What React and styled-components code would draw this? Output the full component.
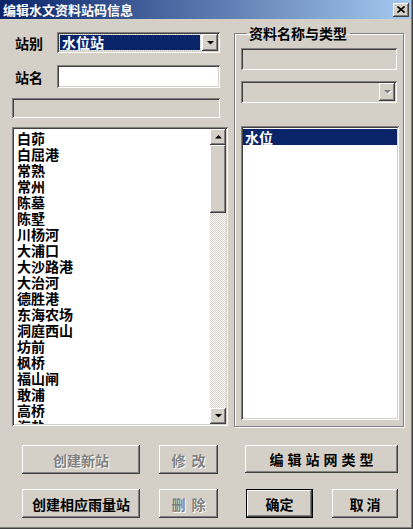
import React from "react";
import styled, { createGlobalStyle } from "styled-components";

const GlobalStyle = createGlobalStyle`
  body {
    margin: 0;
    background: #d4d0c8;
    font-family: "Noto Sans CJK SC", "Liberation Sans", sans-serif;
  }
`;

const stations = [
  "白茆", "白屈港", "常熟", "常州", "陈墓", "陈墅", "川杨河", "大浦口",
  "大沙路港", "大治河", "德胜港", "东海农场", "洞庭西山", "坊前", "枫桥",
  "福山闸", "敢浦", "高桥", "海盐",
];

const sunken = `
  box-shadow: inset 1px 1px #808080, inset -1px -1px #ffffff,
    inset 2px 2px #404040, inset -2px -2px #d4d0c8;
`;

const raised = `
  box-shadow: inset -1px -1px #404040, inset 1px 1px #ffffff,
    inset -2px -2px #808080, inset 2px 2px #d4d0c8;
`;

const Window = styled.div`
  width: 413px;
  height: 529px;
  box-sizing: border-box;
  background: #d4d0c8;
  display: flex;
  flex-direction: column;
  box-shadow: inset -1px -1px #404040, inset -2px -2px #808080;
  font-weight: 700;
  font-size: 14px;
  color: #000;
`;

const TitleBar = styled.div`
  height: 19px;
  width: 411px;
  flex: none;
  box-sizing: border-box;
  display: flex;
  align-items: center;
  justify-content: space-between;
  padding: 0 2px 0 3px;
  background: linear-gradient(to right, #0a246a, #a6caf0);
  color: #fff;
  font-size: 13px;
  line-height: 19px;
`;

const CloseButton = styled.div`
  width: 16px;
  height: 14px;
  display: flex;
  align-items: center;
  justify-content: center;
  background: #d4d0c8;
  ${raised}
`;

const Main = styled.div`
  display: flex;
  align-items: flex-start;
  height: 407px;
  flex: none;
  box-sizing: border-box;
  padding: 7px 0 0 12px;
`;

const LeftColumn = styled.div`
  width: 216px;
  padding-top: 6px;
  display: flex;
  flex-direction: column;
`;

const FieldRow = styled.div`
  display: flex;
  align-items: center;
  margin-top: ${(p) => p.$top || 0}px;
`;

const Label = styled.span`
  width: 45px;
  box-sizing: border-box;
  padding-left: 3px;
  line-height: 16px;
`;

const Combo = styled.div`
  width: ${(p) => p.$width}px;
  height: ${(p) => p.$height}px;
  box-sizing: border-box;
  padding: 2px;
  display: flex;
  align-items: stretch;
  background: ${(p) => (p.$disabled ? "#d4d0c8" : "#fff")};
  ${sunken}
`;

const ComboValue = styled.div`
  flex: 1;
  margin: 1px 2px 1px 1px;
  padding-left: 2px;
  background: ${(p) => (p.$selected ? "#0a246a" : "transparent")};
  color: #fff;
  line-height: 15px;
  outline: ${(p) => (p.$selected ? "1px dotted #c0c0c0" : "none")};
`;

const ArrowButton = styled.div`
  width: 16px;
  flex: none;
  display: flex;
  align-items: center;
  justify-content: center;
  background: #d4d0c8;
  ${raised}
`;

const TextInput = styled.div`
  width: ${(p) => p.$width}px;
  height: ${(p) => p.$height}px;
  box-sizing: border-box;
  background: ${(p) => (p.$disabled ? "#d4d0c8" : "#fff")};
  ${sunken}
`;

const ListBox = styled.div`
  width: ${(p) => p.$width}px;
  height: ${(p) => p.$height}px;
  margin-top: ${(p) => p.$top || 0}px;
  box-sizing: border-box;
  padding: 2px;
  display: flex;
  background: #fff;
  overflow: hidden;
  ${sunken}
`;

const Items = styled.div`
  flex: 1;
  overflow: hidden;
  padding: 1px 0 0 ${(p) => p.$pad}px;
`;

const Item = styled.div`
  line-height: 16px;
  height: 16px;
  white-space: nowrap;
  padding-left: 2px;
  background: ${(p) => (p.$selected ? "#0a246a" : "transparent")};
  color: ${(p) => (p.$selected ? "#fff" : "#000")};
`;

const ScrollBar = styled.div`
  width: 16px;
  flex: none;
  display: flex;
  flex-direction: column;
  background-color: #ffffff;
  background-image: repeating-conic-gradient(#d4d0c8 0 25%, #ffffff 0 50%);
  background-size: 2px 2px;
`;

const ScrollButton = styled.div`
  height: ${(p) => p.$height}px;
  flex: none;
  display: flex;
  align-items: center;
  justify-content: center;
  background: #d4d0c8;
  ${raised}
`;

const Track = styled.div`
  flex: 1;
`;

const Group = styled.fieldset`
  width: 170px;
  height: 401px;
  box-sizing: border-box;
  margin: 0 0 0 6px;
  padding: 8px 0 0 6px;
  border: 1px solid #808080;
  box-shadow: inset 1px 1px #fff, 1px 1px #fff;
  display: flex;
  flex-direction: column;
`;

const Legend = styled.legend`
  margin-left: 6px;
  padding: 0 3px 0 2px;
  line-height: 14px;
  font-size: 14px;
`;

const Stack = styled.div`
  display: flex;
  flex-direction: column;
  gap: ${(p) => p.$gap}px;
`;

const Footer = styled.div`
  display: grid;
  grid-template-columns: 118px 59px 161px;
  grid-template-rows: 29px 29px;
  column-gap: 19px;
  row-gap: 15px;
  padding: 19px 0 0 22px;
`;

const Button = styled.div`
  height: ${(p) => p.$height || 29}px;
  width: ${(p) => (p.$width ? `${p.$width}px` : "auto")};
  box-sizing: border-box;
  display: flex;
  align-items: center;
  justify-content: center;
  background: #d4d0c8;
  color: ${(p) => (p.$disabled ? "#808080" : "#000")};
  text-shadow: ${(p) => (p.$disabled ? "1px 1px #fff" : "none")};
  letter-spacing: ${(p) => p.$spacing || 0}px;
  text-indent: ${(p) => p.$spacing || 0}px;
  white-space: nowrap;
  ${raised}
  ${(p) =>
    p.$default &&
    `
    border: 1px solid #000;
    box-shadow: inset -1px -1px #404040, inset 1px 1px #ffffff,
      inset -2px -2px #808080;
  `}
`;

const WideButton = styled(Button)`
  width: 153px;
  justify-self: end;
`;

const ButtonPair = styled.div`
  width: 153px;
  justify-self: end;
  display: flex;
  justify-content: space-between;
  padding-left: 1px;
  box-sizing: border-box;
`;

const DownArrow = ({ color = "#000", shadow }) => (
  <svg width="9" height="6" viewBox="0 0 9 6">
    {shadow && <path d="M2 2h7L5.5 5.5z" fill="#fff" />}
    <path d="M1 1h7L4.5 4.5z" fill={color} />
  </svg>
);

const UpArrow = () => (
  <svg width="9" height="6" viewBox="0 0 9 6">
    <path d="M1 4.5h7L4.5 1z" fill="#000" />
  </svg>
);

const CloseIcon = () => (
  <svg width="8" height="7" viewBox="0 0 8 7">
    <path d="M0.5 0.5l7 6M7.5 0.5l-7 6" stroke="#000" strokeWidth="1.6" />
  </svg>
);

export default function App() {
  return (
    <>
      <GlobalStyle />
      <Window>
        <TitleBar>
          <span>编辑水文资料站码信息</span>
          <CloseButton>
            <CloseIcon />
          </CloseButton>
        </TitleBar>
        <Main>
          <LeftColumn>
            <FieldRow>
              <Label>站别</Label>
              <Combo $width={163} $height={21}>
                <ComboValue $selected>水位站</ComboValue>
                <ArrowButton>
                  <DownArrow />
                </ArrowButton>
              </Combo>
            </FieldRow>
            <FieldRow $top={12}>
              <Label>站名</Label>
              <TextInput $width={163} $height={23} />
            </FieldRow>
            <FieldRow $top={10}>
              <TextInput $width={208} $height={20} $disabled />
            </FieldRow>
            <ListBox $width={216} $height={299} $top={9}>
              <Items $pad={1}>
                {stations.map((s) => (
                  <Item key={s}>{s}</Item>
                ))}
              </Items>
              <ScrollBar>
                <ScrollButton $height={16}>
                  <UpArrow />
                </ScrollButton>
                <ScrollButton $height={68} />
                <Track />
                <ScrollButton $height={16}>
                  <DownArrow />
                </ScrollButton>
              </ScrollBar>
            </ListBox>
          </LeftColumn>
          <Group>
            <Legend>资料名称与类型</Legend>
            <Stack $gap={11}>
              <TextInput $width={156} $height={22} $disabled />
              <Combo $width={156} $height={22} $disabled>
                <ComboValue />
                <ArrowButton>
                  <DownArrow color="#808080" shadow />
                </ArrowButton>
              </Combo>
            </Stack>
            <ListBox $width={158} $height={294} $top={23}>
              <Items $pad={0}>
                <Item $selected>水位</Item>
              </Items>
            </ListBox>
          </Group>
        </Main>
        <Footer>
          <Button $disabled>创建新站</Button>
          <Button $disabled $spacing={6}>修改</Button>
          <WideButton $height={28} $spacing={4}>编辑站网类型</WideButton>
          <Button>创建相应雨量站</Button>
          <Button $disabled $spacing={6}>删除</Button>
          <ButtonPair>
            <Button $width={67} $default>确定</Button>
            <Button $width={66} $spacing={3}>取消</Button>
          </ButtonPair>
        </Footer>
      </Window>
    </>
  );
}
